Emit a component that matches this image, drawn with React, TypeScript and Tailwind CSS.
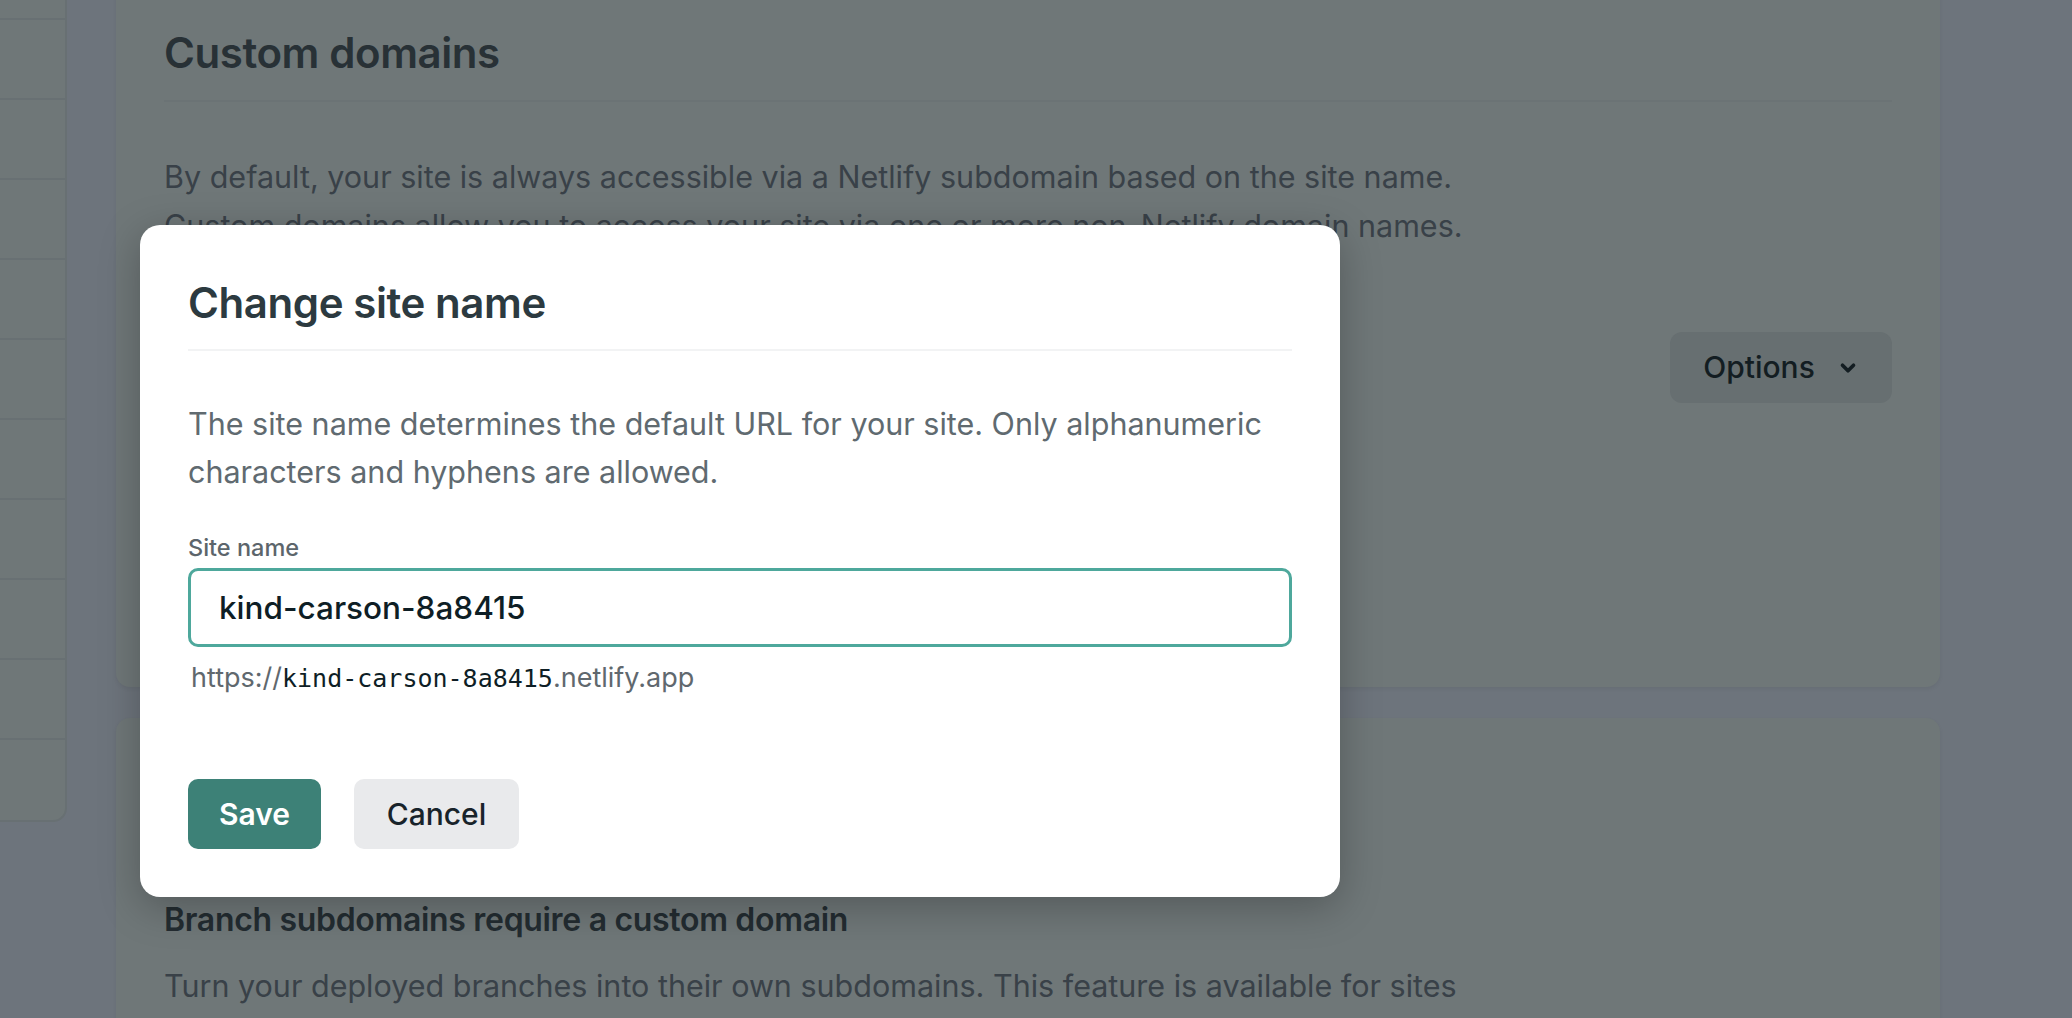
import { ChevronDown } from "lucide-react";

const sidebarRows = Array.from({ length: 11 });

const App = () => {
  return (
    <div
      className="relative h-[1018px] w-[2072px] overflow-hidden bg-[#6d747c]"
      style={{ fontFamily: "Inter, 'Noto Sans', sans-serif" }}
    >
      <div className="flex gap-[49px]">
        {/* sidebar (cut off) */}
        <div className="mt-[-60px] w-[67px] shrink-0 self-start overflow-hidden rounded-br-[14px] border-r-2 border-b-2 border-[#687073] bg-[#6f7778]">
          {sidebarRows.map((_, i) => (
            <div
              key={i}
              className={`h-[80px] ${i < sidebarRows.length - 1 ? "border-b-2 border-[#687073]" : ""}`}
            />
          ))}
        </div>

        {/* main column */}
        <div className="flex w-[1824px] shrink-0 flex-col gap-[31px]">
          <div className="mt-[-20px] h-[707px] rounded-[14px] bg-[#6f7778] px-[48px] pt-[48px] shadow-[0_2px_4px_rgba(0,0,0,0.06)]">
            <h2 className="text-[42px] leading-[50px] font-semibold tracking-[-0.01em] text-[#283136]">
              Custom domains
            </h2>
            <div className="mt-[22px] h-[2px] bg-[#6b7375]" />
            <p className="mt-[50px] text-[30.5px] leading-[49px] text-[#394148]">
              By default, your site is always accessible via a Netlify subdomain based on the site name.
              <br />
              Custom domains allow you to access your site via one or more non-Netlify domain names.
            </p>
            <div className="mt-[82px] flex justify-end">
              <button className="flex h-[71px] w-[222px] items-center justify-center gap-[22px] rounded-[12px] bg-[#676f71] text-[30px] font-medium text-[#131d22]">
                Options
                <ChevronDown size={22} strokeWidth={4} />
              </button>
            </div>
          </div>

          <div className="h-[400px] rounded-[14px] bg-[#6f7778] px-[48px] pt-[182px] shadow-[0_2px_4px_rgba(0,0,0,0.06)]">
            <h3 className="text-[32px] leading-[40px] font-semibold tracking-[-0.01em] text-[#232c31]">
              Branch subdomains require a custom domain
            </h3>
            <p className="mt-[21px] text-[30.5px] leading-[49px] text-[#394148]">
              Turn your deployed branches into their own subdomains. This feature is available for sites
            </p>
          </div>
        </div>
      </div>

      {/* modal */}
      <div className="absolute top-[225px] left-[140px] w-[1200px] rounded-[20px] bg-white px-[48px] pt-[52px] pb-[48px] shadow-[0_10px_40px_rgba(0,0,0,0.25)]">
        <h2 className="text-[42px] leading-[52px] font-semibold tracking-[-0.01em] text-[#2c3a40]">
          Change site name
        </h2>
        <div className="mt-[20px] h-[2px] bg-[#f2f3f4]" />
        <p className="mt-[49px] text-[30.5px] leading-[48px] text-[#606a70]">
          The site name determines the default URL for your site. Only alphanumeric
          <br />
          characters and hyphens are allowed.
        </p>
        <label className="mt-[37px] block text-[23.5px] leading-[30px] font-medium text-[#5c656b]">
          Site name
        </label>
        <div className="mt-[5px] flex h-[79px] items-center rounded-[10px] border-[3px] border-[#4ea89c] pl-[28px] text-[31.5px] font-medium text-[#0e1e25]">
          kind-carson-8a8415
        </div>
        <div className="mt-[14px] pl-[3px] text-[27px] leading-[34px] text-[#60686e]">
          https://
          <span className="text-[25px] text-[#0e1e25]" style={{ fontFamily: "'DejaVu Sans Mono', monospace" }}>
            kind-carson-8a8415
          </span>
          .netlify.app
        </div>
        <div className="mt-[83px] flex gap-[33px]">
          <button className="h-[70px] w-[133px] rounded-[10px] bg-[#3d8177] text-[30px] font-semibold text-white">
            Save
          </button>
          <button className="h-[70px] w-[165px] rounded-[10px] bg-[#e9eaec] text-[30px] font-medium text-[#18232a]">
            Cancel
          </button>
        </div>
      </div>
    </div>
  );
};

export default App;
